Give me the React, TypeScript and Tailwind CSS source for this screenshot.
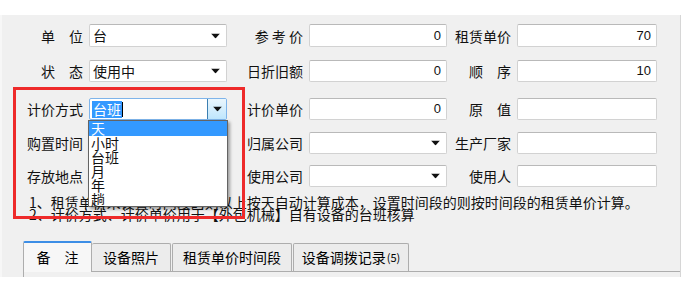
import React from "react";

const CJK = '"Noto Sans CJK SC", "Noto Sans", sans-serif';

function Arrow() {
  return (
    <svg width="9" height="5" viewBox="0 0 9 5" className="absolute right-[6px] top-1/2 -translate-y-1/2">
      <path d="M0 0 H9 L4.5 5 Z" fill="#111" />
    </svg>
  );
}

function Field({
  label,
  value,
  align = "right",
  combo = false,
  w,
  h = 22,
}: {
  label: string;
  value?: string;
  align?: "left" | "right";
  combo?: boolean;
  w: number;
  h?: number;
}) {
  return (
    <div className="flex items-center" style={{ width: w }}>
      <div className="w-[56px] shrink-0 text-right text-[14px] leading-none text-[#111] whitespace-pre" style={{ fontFamily: CJK }}>
        {label}
      </div>
      <div
        className={`relative ml-[6px] flex-1 rounded-[2px] border border-[#d2d2d2] border-t-[#b9b9b9] bg-white flex items-center ${
          align === "right" ? "justify-end pr-[5px]" : "justify-start pl-[3px]"
        }`}
        style={{ height: h }}
      >
        {value && (
          <span
            className={align === "right" ? "text-[13px] text-[#111]" : "text-[14px] text-[#111]"}
            style={{ fontFamily: align === "right" ? '"Liberation Sans", sans-serif' : CJK }}
          >
            {value}
          </span>
        )}
        {combo && <Arrow />}
      </div>
    </div>
  );
}

function Label({ children }: { children: React.ReactNode }) {
  return (
    <div className="w-[56px] shrink-0 text-right text-[14px] leading-none text-[#111] whitespace-pre" style={{ fontFamily: CJK }}>
      {children}
    </div>
  );
}

export default function App() {
  return (
    <div className="relative w-[684px] h-[293px] bg-white overflow-hidden" style={{ fontFamily: CJK }}>
      <div className="mt-[15px] h-[262px] w-[681px] bg-[#f0f0f0] border-l-2 border-l-[#f7f7f7] border-r border-r-[#d6d6d6] pt-[9px] pl-[25px] overflow-hidden">
        {/* Row 1 */}
        <div className="flex">
          <Field label={"单　位"} value="台" align="left" combo w={200} h={23} />
          <div className="ml-[20px]">
            <Field label="参 考 价" value="0" w={200} h={23} />
          </div>
          <div className="ml-[8px]">
            <Field label="租赁单价" value="70" w={202} h={23} />
          </div>
        </div>
        {/* Row 2 */}
        <div className="flex mt-[13px]">
          <Field label={"状　态"} value="使用中" align="left" combo w={200} />
          <div className="ml-[20px]">
            <Field label="日折旧额" value="0" w={200} />
          </div>
          <div className="ml-[8px]">
            <Field label={"顺　序"} value="10" w={202} />
          </div>
        </div>
        {/* Row 3 */}
        <div className="flex mt-[16px]">
          <div className="flex items-center w-[200px]">
            <Label>计价方式</Label>
            <div className="relative ml-[6px] flex-1 h-[22px] rounded-[2px] border border-[#7eb4ea] bg-white flex items-center pl-[2px]">
              <span className="bg-[#3399ff] text-white text-[14px] leading-[17px] px-[1px]">台班</span>
              <span className="w-px h-[15px] bg-black" />
              <div className="absolute right-0 top-0 bottom-0 w-[19px] border-l border-[#3c7fb1] bg-gradient-to-b from-[#eaf6fd] to-[#bee6fd] rounded-r-[1px]">
                <svg width="9" height="5" viewBox="0 0 9 5" className="absolute left-[5px] top-1/2 -translate-y-1/2">
                  <path d="M0 0 H9 L4.5 5 Z" fill="#111" />
                </svg>
              </div>
            </div>
          </div>
          <div className="ml-[20px]">
            <Field label="计价单价" value="0" w={200} />
          </div>
          <div className="ml-[8px]">
            <Field label={"原　值"} w={202} />
          </div>
        </div>
        {/* Row 4 */}
        <div className="flex mt-[12px]">
          <Field label="购置时间" combo w={200} />
          <div className="ml-[20px]">
            <Field label="归属公司" combo w={200} />
          </div>
          <div className="ml-[8px]">
            <Field label="生产厂家" w={202} />
          </div>
        </div>
        {/* Row 5 */}
        <div className="flex mt-[11px]">
          <Field label="存放地点" combo w={200} />
          <div className="ml-[20px]">
            <Field label="使用公司" combo w={200} />
          </div>
          <div className="ml-[8px]">
            <Field label="使用人" w={202} />
          </div>
        </div>
        {/* Notes */}
        <div className="mt-[9px] ml-[2px] text-[14px] leading-[12px] text-[#111] whitespace-nowrap" style={{ fontFamily: CJK }}>
          <div>1、租赁单价未设置时间段的则以上按天自动计算成本，设置时间段的则按时间段的租赁单价计算。</div>
          <div>2、计价方式、计价单价用于【外包机械】自有设备的台班核算</div>
        </div>
        {/* Tabs */}
        <div className="mt-[21px] -ml-[4px] flex items-end border-b border-[#adadad] h-[31px]">
          <div className="relative w-[69px] h-[31px] -mb-px bg-[#f7f7f7] border border-[#adadad] border-b-0 border-t-2 border-t-[#3d8ee6] rounded-t-[2px] flex items-center justify-center text-[14px] whitespace-pre">
            {"备　注"}
          </div>
          <div className="w-[79px] h-[28px] bg-[#ececec] border border-[#adadad] border-b-0 border-l-0 rounded-t-[2px] flex items-center justify-center text-[14px]">
            设备照片
          </div>
          <div className="ml-[1px] w-[120px] h-[28px] bg-[#ececec] border border-[#adadad] border-b-0 rounded-t-[2px] flex items-center justify-center text-[14px]">
            租赁单价时间段
          </div>
          <div className="ml-[1px] w-[116px] h-[28px] bg-[#ececec] border border-[#adadad] border-b-0 rounded-t-[2px] flex items-center justify-center text-[14px]">
            设备调拨记录<span className="text-[11px] ml-[1px]">(5)</span>
          </div>
        </div>
        <div className="-ml-[4px] h-[10px] border-l border-[#adadad]" />
      </div>

      {/* Red annotation box */}
      <div className="absolute left-[13px] top-[87px] w-[232px] h-[132px] border-[3px] border-[#ee2a2a]" />

      {/* Dropdown list */}
      <div
        className="absolute left-[88px] top-[120px] w-[140px] h-[87px] bg-white border border-[#646464] shadow-[2px_2px_3px_rgba(0,0,0,0.35)] text-[14px] leading-[14px] text-[#111]"
        style={{ fontFamily: CJK }}
      >
        <div className="bg-[#3399ff] text-white pl-[2px] h-[15px]">天</div>
        <div className="pl-[2px] h-[14px]">小时</div>
        <div className="pl-[2px] h-[14px]">台班</div>
        <div className="pl-[2px] h-[14px]">月</div>
        <div className="pl-[2px] h-[14px]">年</div>
        <div className="pl-[2px] h-[14px]">趟</div>
      </div>
    </div>
  );
}
